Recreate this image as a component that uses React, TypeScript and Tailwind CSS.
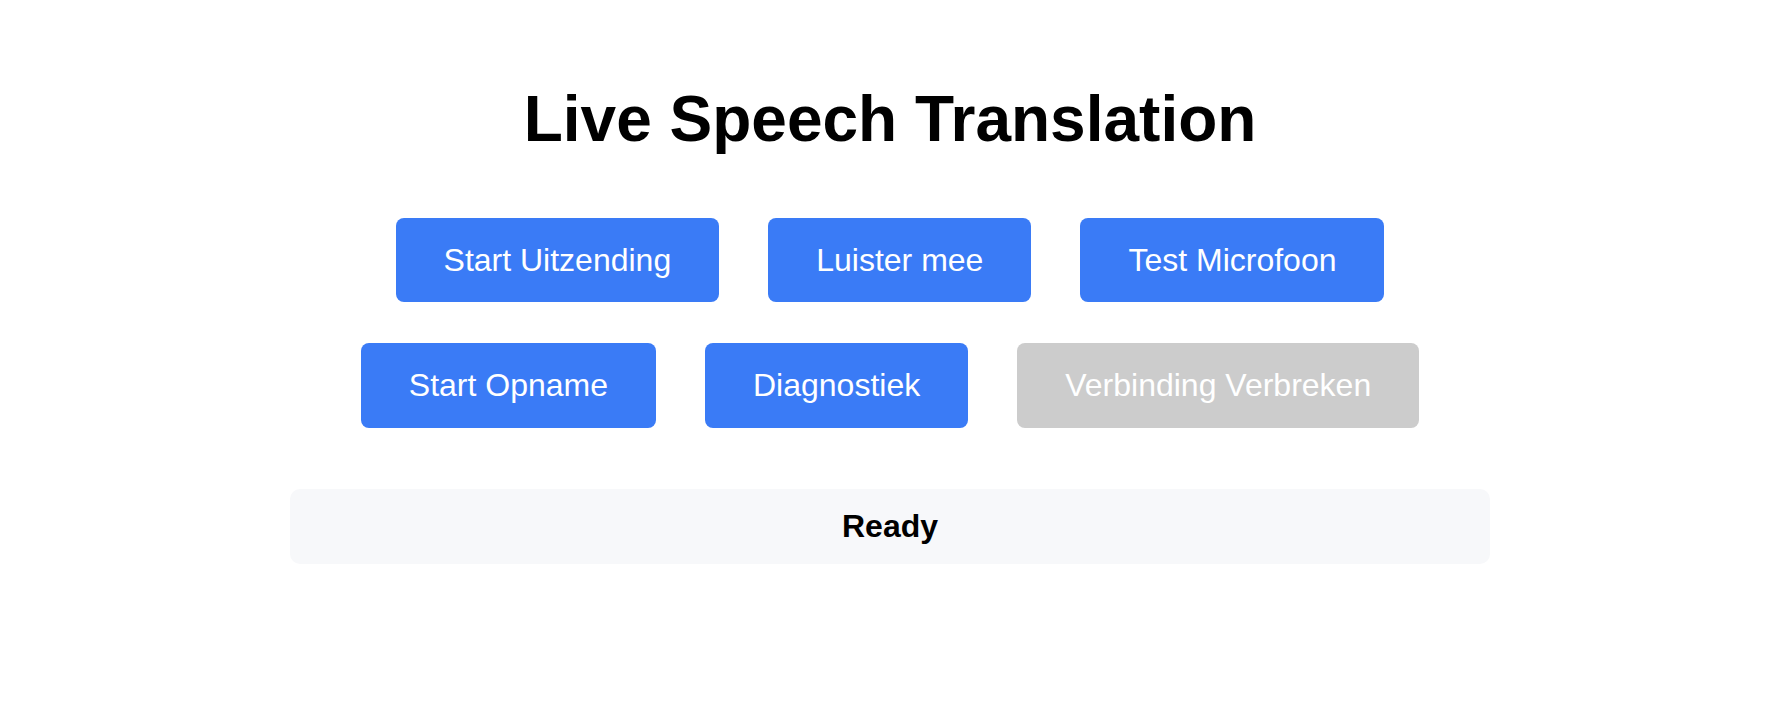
const row1 = ["Start Uitzending", "Luister mee", "Test Microfoon"];
const row2 = ["Start Opname", "Diagnostiek"];

const Button = ({ label, disabled = false }: { label: string; disabled?: boolean }) => (
  <button
    disabled={disabled}
    className={`rounded-[8px] px-12 py-6 text-[32px] leading-[1.15] text-white ${
      disabled ? "bg-[#cccccc]" : "bg-[#3a7bf6]"
    }`}
  >
    {label}
  </button>
);

export default function App() {
  return (
    <div className="min-h-[722px] bg-white pl-3 font-['Liberation_Sans',Arial,sans-serif] text-black">
      <div className="mx-auto flex w-[1200px] flex-col items-center">
        <h1 className="mt-[83px] text-[64px] font-bold leading-[1.15]">Live Speech Translation</h1>

        <div className="mt-[61px] flex gap-[49px]">
          {row1.map((label) => (
            <Button key={label} label={label} />
          ))}
        </div>
        <div className="mt-[41px] flex gap-[49px]">
          {row2.map((label) => (
            <Button key={label} label={label} />
          ))}
          <Button label="Verbinding Verbreken" disabled />
        </div>

        <div className="mt-[61px] w-full rounded-[10px] bg-[#f7f8fa] py-[19px] text-center text-[32px] font-bold leading-[1.15]">
          Ready
        </div>
      </div>
    </div>
  );
}
